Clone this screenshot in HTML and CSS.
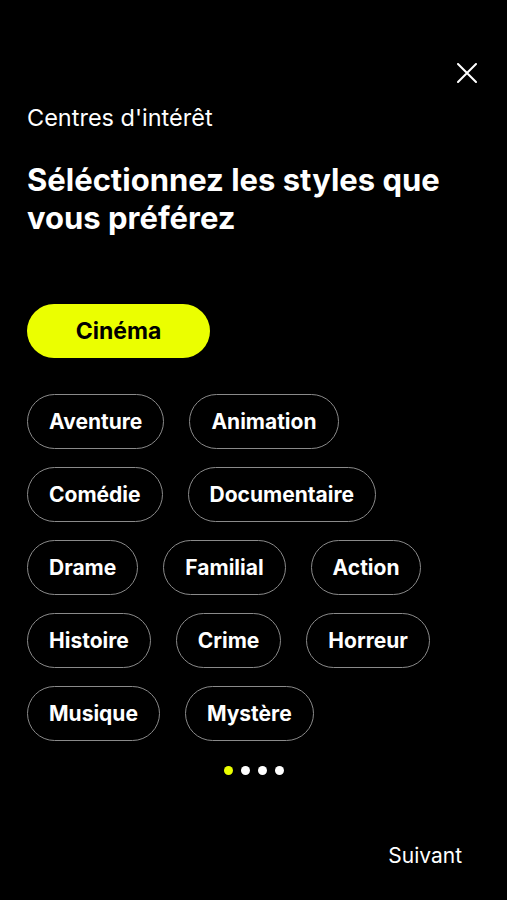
FILE: index.html
```html
<!DOCTYPE html>
<html lang="fr">
<head>
    <meta charset="UTF-8">
    <meta name="viewport" content="width=device-width, initial-scale=1.0">
    <title>Centres d'intérêt</title>
    <link rel="stylesheet" href="styles.css">
</head>
<body>

    <main class="ecran">

        <div class="barre">
            <button class="fermer" aria-label="Fermer">
                <svg width="20" height="20" viewBox="0 0 20 20">
                    <path d="M1 1 L19 19 M19 1 L1 19" stroke="#fff" stroke-width="2" stroke-linecap="round"/>
                </svg>
            </button>
        </div>

        <p class="sous-titre">Centres d'intérêt</p>
        <h1 class="titre">Séléctionnez les styles que vous préférez</h1>

        <div class="categorie">
            <button class="pilule-active">Cinéma</button>
        </div>

        <div class="styles">
            <button class="chip">Aventure</button>
            <button class="chip">Animation</button>
            <button class="chip">Comédie</button>
            <button class="chip">Documentaire</button>
            <button class="chip">Drame</button>
            <button class="chip">Familial</button>
            <button class="chip">Action</button>
            <button class="chip">Histoire</button>
            <button class="chip">Crime</button>
            <button class="chip">Horreur</button>
            <button class="chip">Musique</button>
            <button class="chip">Mystère</button>
        </div>

        <div class="points">
            <span class="point actif"></span>
            <span class="point"></span>
            <span class="point"></span>
            <span class="point"></span>
        </div>

        <div class="bas">
            <button class="suivant">Suivant</button>
        </div>

    </main>

</body>
</html>
```

FILE: styles.css
```css
body{
    margin: 0;
    background-color: #000;
    font-family: Inter, "Noto Sans", sans-serif;
    color: #fff;
}

.ecran{
    width: 507px;
    height: 900px;
    box-sizing: border-box;
    padding: 0 27px;
    display: flex;
    flex-direction: column;
}

button{
    font-family: inherit;
    background: none;
    border: 0;
    color: inherit;
    padding: 0;
    cursor: pointer;
}

.barre{
    display: flex;
    justify-content: flex-end;
    padding-top: 63px;
    padding-right: 3px;
}

.fermer{
    width: 20px;
    height: 20px;
}

.fermer svg{
    display: block;
}

.sous-titre{
    margin: 21px 0 0 0;
    font-size: 23.5px;
    line-height: 28px;
    font-weight: 400;
}

.titre{
    margin: 29px 0 0 0;
    font-size: 31px;
    line-height: 38px;
    font-weight: 700;
    max-width: 450px;
}

.categorie{
    display: flex;
    margin-top: 67px;
}

.pilule-active{
    width: 183px;
    height: 54px;
    border-radius: 27px;
    background-color: #ebff00;
    color: #000;
    font-size: 23px;
    font-weight: 700;
}

.styles{
    display: flex;
    flex-wrap: wrap;
    column-gap: 25px;
    row-gap: 18px;
    margin-top: 36px;
    width: 430px;
}

.chip{
    height: 55px;
    box-sizing: border-box;
    padding: 0 21px;
    border: 1px solid #8a8a8a;
    border-radius: 28px;
    font-size: 21px;
    font-weight: 700;
}

.points{
    display: flex;
    justify-content: center;
    gap: 8px;
    margin-top: 25px;
}

.point{
    width: 9px;
    height: 9px;
    border-radius: 50%;
    background-color: #fff;
}

.point.actif{
    background-color: #ebff00;
}

.bas{
    display: flex;
    justify-content: flex-end;
    margin-top: auto;
    padding-bottom: 32px;
    padding-right: 18px;
}

.suivant{
    font-size: 21px;
    font-weight: 400;
}
```
